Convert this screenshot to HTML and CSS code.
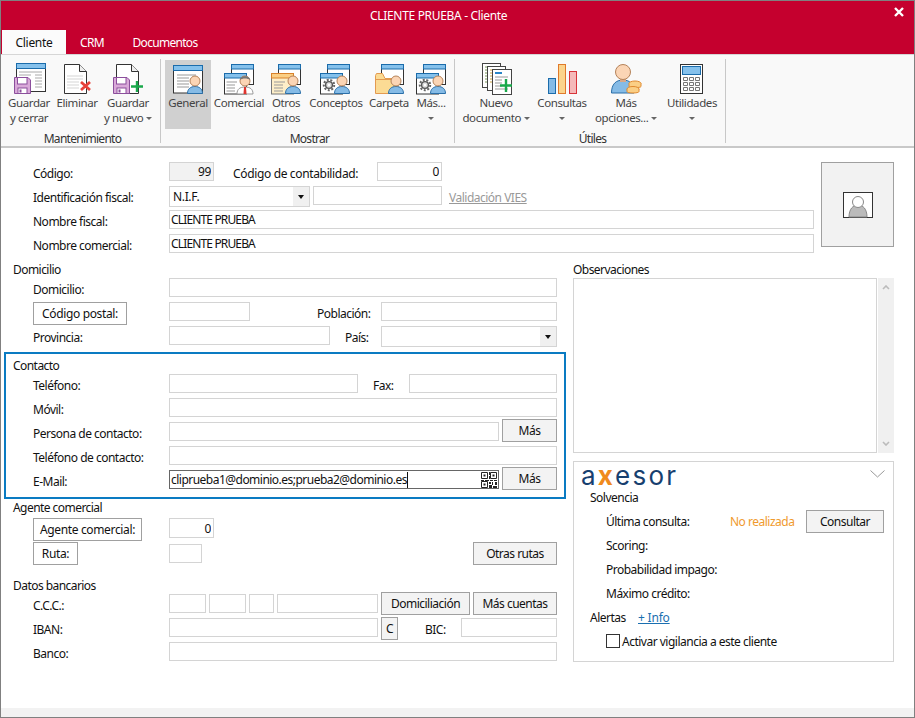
FILE: index.html
```html
<!DOCTYPE html>
<html lang="es">
<head>
<meta charset="utf-8">
<title>CLIENTE PRUEBA - Cliente</title>
<link rel="stylesheet" href="styles.css">
</head>
<body>
<svg class="defs" width="0" height="0" aria-hidden="true">
  <defs>
    <g id="person">
      <path d="M-7.5 12.5C-7.5 8-4.5 5.5 0 5.5S7.5 8 7.5 12.5Z" fill="#85bbe6" stroke="#2a6fa8"/>
      <circle r="5" fill="#fbd5b5" stroke="#b5835a"/>
    </g>
    <g id="gear">
      <circle r="5.2" fill="none" stroke="#666" stroke-width="2" stroke-dasharray="2 1.6"/>
      <circle r="3.4" fill="#ddd" stroke="#555" stroke-width="1.4"/>
      <circle r="1.2" fill="#fff"/>
    </g>
    <g id="floppy">
      <path d="M.5.5H14L16.5 3V16.5H.5Z" fill="#d9a9d9" stroke="#8b4f9c"/>
      <rect x="3.5" y=".5" width="9.5" height="6.5" fill="#fff" stroke="#8b4f9c"/>
      <rect x="4" y="11" width="9" height="5.5" fill="#fff" stroke="#8b4f9c"/>
      <rect x="5.5" y="12.5" width="2" height="3" fill="#8b4f9c"/>
    </g>
    <g id="backwin">
      <rect x=".5" y=".5" width="22" height="20" fill="#fff" stroke="#333"/>
      <rect x=".5" y=".5" width="22" height="4.5" fill="#85c1ec" stroke="#1b6cab"/>
    </g>
    <g id="frontwin">
      <rect x=".5" y=".5" width="22" height="20.5" fill="#fff" stroke="#333"/>
      <rect x=".5" y=".5" width="22" height="4.5" fill="#85c1ec" stroke="#1b6cab"/>
    </g>
  </defs>
</svg>

<div class="window">
  <header class="titlebar">
    <div class="title-row">
      <span class="title">CLIENTE PRUEBA - Cliente</span>
      <svg class="close" width="10" height="10" viewBox="0 0 10 10"><path d="M1 1L9 9M9 1L1 9" stroke="#fff" stroke-width="2.4"/></svg>
    </div>
    <nav class="tabs">
      <span class="tab tab-cliente">Cliente</span>
      <span class="tab tab-crm">CRM</span>
      <span class="tab tab-docs">Documentos</span>
    </nav>
  </header>

  <section class="ribbon">
    <div class="rb-group group-1">
      <div class="rb-buttons">
        <div class="rb-btn w48">
          <svg class="rb-icon" viewBox="0 0 36 36">
            <rect x="5.5" y="1.5" width="29" height="28" fill="#fff" stroke="#333"/>
            <rect x="5.5" y="1.5" width="29" height="5" fill="#85c1ec" stroke="#1b6cab"/>
            <path d="M8 10H31M8 13H20M24 13H31M24 16H31M24 19H31M24 22H31M24 25H31" stroke="#aaa"/>
            <use href="#floppy" x="3" y="15"/>
          </svg>
          <span class="rb-text">Guardar<br>y cerrar</span>
        </div>
        <div class="rb-btn w48">
          <svg class="rb-icon" viewBox="0 0 36 36">
            <path d="M5.5 2.5H20.5L27.5 9.5V31.5H5.5Z" fill="#fff" stroke="#333"/>
            <path d="M20.5 2.5V9.5H27.5" fill="#eee" stroke="#333"/>
            <path d="M8 14H24M8 17H24M8 20H20M8 23H20M8 26H20" stroke="#d5d5d5"/>
            <path d="M22 20L31 28M31 20L22 28" stroke="#e8413a" stroke-width="2.8"/>
          </svg>
          <span class="rb-text">Eliminar</span>
        </div>
        <div class="rb-btn w54">
          <svg class="rb-icon" viewBox="0 0 36 36">
            <path d="M6.5 2.5H21.5L28.5 9.5V31.5H6.5Z" fill="#fff" stroke="#333"/>
            <path d="M21.5 2.5V9.5H28.5" fill="#eee" stroke="#333"/>
            <use href="#floppy" x="3" y="15"/>
            <path d="M27 19V30M21 24.5H33" stroke="#19a84a" stroke-width="2.4"/>
          </svg>
          <span class="rb-text">Guardar<br>y nuevo <i class="caret"></i></span>
        </div>
      </div>
      <div class="rb-label">Mantenimiento</div>
    </div>
    <div class="rb-sep"></div>

    <div class="rb-group group-2">
      <div class="rb-buttons">
        <div class="rb-btn w46 rb-active">
          <svg class="rb-icon" viewBox="0 0 36 36">
            <rect x="3.5" y="3.5" width="29" height="27.5" fill="#fff" stroke="#333"/>
            <rect x="3.5" y="3.5" width="29" height="5" fill="#85c1ec" stroke="#1b6cab"/>
            <path d="M7 13H26M7 16H19M7 19H19M7 22H19M7 25H19" stroke="#999"/>
            <use href="#person" x="25" y="19"/>
          </svg>
          <span class="rb-text">General</span>
        </div>
        <div class="rb-btn w56">
          <svg class="rb-icon" viewBox="0 0 36 36">
            <use href="#backwin" x="10" y="2"/>
            <use href="#frontwin" x="3" y="11"/>
            <path d="M5.5 20H16M5.5 23H14M5.5 26H14M5.5 29H14" stroke="#999"/>
            <path d="M16 32C16 27 19 25 24 25S32 27 32 32Z" fill="#fff" stroke="#999"/>
            <path d="M23 25H25L25.5 32H22.5Z" fill="#e0352f"/>
            <circle cx="24" cy="19" r="5" fill="#fbd5b5" stroke="#b5835a"/>
            <path d="M19 18C19 13 29 13 29 18C27 16 21 16 19 18Z" fill="#777"/>
          </svg>
          <span class="rb-text">Comercial</span>
        </div>
        <div class="rb-btn w38">
          <svg class="rb-icon" viewBox="0 0 36 36">
            <use href="#backwin" x="10" y="2"/>
            <rect x="3.5" y="11.5" width="22" height="20.5" fill="#fdeec8" stroke="#777"/>
            <rect x="3.5" y="11.5" width="22" height="4.5" fill="#fbcf85" stroke="#d9822b"/>
            <path d="M6 20H17M6 23H15M6 26H15M6 29H15" stroke="#999"/>
            <use href="#person" x="25" y="19"/>
          </svg>
          <span class="rb-text">Otros<br>datos</span>
        </div>
        <div class="rb-btn w62">
          <svg class="rb-icon" viewBox="0 0 36 36">
            <use href="#backwin" x="9" y="2"/>
            <use href="#frontwin" x="2" y="11"/>
            <use href="#gear" x="11" y="23"/>
            <use href="#person" x="24" y="19"/>
          </svg>
          <span class="rb-text">Conceptos</span>
        </div>
        <div class="rb-btn w44">
          <svg class="rb-icon" viewBox="0 0 36 36">
            <use href="#backwin" x="10" y="2"/>
            <path d="M4.5 13.5V31.5H27V16.5H14L11.5 11.5H5.5Z" fill="#fbdb94" stroke="#e39a50"/>
            <path d="M4.5 17.5H27" stroke="#e39a50"/>
            <use href="#person" x="25" y="19"/>
          </svg>
          <span class="rb-text">Carpeta</span>
        </div>
        <div class="rb-btn w40">
          <svg class="rb-icon" viewBox="0 0 36 36">
            <use href="#backwin" x="10" y="2"/>
            <use href="#frontwin" x="3" y="11"/>
            <use href="#gear" x="12" y="23"/>
            <use href="#person" x="25" y="19"/>
          </svg>
          <span class="rb-text">Más...<br><i class="caret"></i></span>
        </div>
      </div>
      <div class="rb-label">Mostrar</div>
    </div>
    <div class="rb-sep"></div>

    <div class="rb-group group-3">
      <div class="rb-buttons">
        <div class="rb-btn w72">
          <svg class="rb-icon" viewBox="0 0 36 36">
            <rect x="4.5" y="1.5" width="18" height="24" fill="#fff" stroke="#444"/>
            <path d="M7 5H19M7 8H19M7 11H19M7 14H19M7 17H19M7 20H19" stroke="#7a9a5a"/>
            <rect x="9.5" y="4.5" width="18" height="24" fill="#fff" stroke="#444"/>
            <path d="M12 8H24M12 11H24M12 14H24M12 17H24M12 20H24" stroke="#c8a040"/>
            <rect x="14.5" y="7.5" width="19" height="25" fill="#fff" stroke="#444"/>
            <path d="M17 11H24" stroke="#2a86c8" stroke-width="2"/>
            <path d="M17 15H30M17 18H24M17 21H24M17 24H24M17 27H30" stroke="#999"/>
            <path d="M28 17V30M22 23.5H34" stroke="#19a84a" stroke-width="2.4"/>
          </svg>
          <span class="rb-text">Nuevo<br>documento <i class="caret"></i></span>
        </div>
        <div class="rb-btn w60">
          <svg class="rb-icon" viewBox="0 0 36 36">
            <rect x="4.5" y="16.5" width="7" height="15" fill="#85bbe6" stroke="#1b6cab"/>
            <rect x="14.5" y="2.5" width="7" height="29" fill="#fbd48c" stroke="#e07a2b"/>
            <rect x="25.5" y="9.5" width="7" height="22" fill="#f5b9b9" stroke="#d8343a"/>
          </svg>
          <span class="rb-text">Consultas<br><i class="caret"></i></span>
        </div>
        <div class="rb-btn w68">
          <svg class="rb-icon" viewBox="0 0 36 36">
            <path d="M3.5 31C3.5 22 8 18 15 18S26 22 26 31Z" fill="#85bbe6" stroke="#2a6fa8"/>
            <rect x="12" y="16" width="6" height="4" fill="#d8a888"/>
            <circle cx="15" cy="10" r="7.5" fill="#fbd5b5" stroke="#b5835a"/>
            <ellipse cx="27" cy="21.500" rx="6" ry="2.500" fill="#fbcf85" stroke="#e08a30"/>
            <path d="M21 21.500V24.500C21 26 33 26 33 24.500V21.500" fill="#fbcf85" stroke="#e08a30"/>
            <ellipse cx="25" cy="27" rx="6" ry="2.500" fill="#fbcf85" stroke="#e08a30"/>
            <path d="M19 27V29.500C19 31.500 31 31.500 31 29.500V27" fill="#fbcf85" stroke="#e08a30"/>
          </svg>
          <span class="rb-text">Más<br>opciones... <i class="caret"></i></span>
        </div>
        <div class="rb-btn w64">
          <svg class="rb-icon" viewBox="0 0 36 36">
            <rect x="6.500" y="2.500" width="22" height="29" fill="#fff" stroke="#333"/>
            <rect x="8.500" y="4.500" width="18" height="8" fill="#85c1ec" stroke="#1b6cab"/>
            <path d="M9.500 15.500h4v3h-4zM15.500 15.500h4v3h-4zM21.500 15.500h4v3h-4zM9.500 20.500h4v3h-4zM15.500 20.500h4v3h-4zM21.500 20.500h4v3h-4zM9.500 25.500h4v3h-4zM15.500 25.500h4v3h-4zM21.500 25.500h4v3h-4z" fill="none" stroke="#777"/>
          </svg>
          <span class="rb-text">Utilidades<br><i class="caret"></i></span>
        </div>
      </div>
      <div class="rb-label">Útiles</div>
    </div>
    <div class="rb-sep"></div>
  </section>

  <main class="main">
    <section class="top">
      <div class="top-fields">
        <div class="row">
          <label class="lbl">Código:</label>
          <input class="in w45 num shaded" value="99" readonly>
          <label class="lbl w144 ml19">Código de contabilidad:</label>
          <input class="in w65 num" value="0" readonly>
        </div>
        <div class="row">
          <label class="lbl">Identificación fiscal:</label>
          <div class="select w141"><span class="sel-text">N.I.F.</span><b class="sel-arrow"><i></i></b></div>
          <input class="in w129 ml3" readonly>
          <a class="vies">Validación VIES</a>
        </div>
        <div class="row">
          <label class="lbl">Nombre fiscal:</label>
          <input class="in w645" value="CLIENTE PRUEBA" readonly>
        </div>
        <div class="row">
          <label class="lbl">Nombre comercial:</label>
          <input class="in w645" value="CLIENTE PRUEBA" readonly>
        </div>
      </div>
      <div class="photo">
        <svg width="30" height="26" viewBox="0 0 30 26">
          <rect x=".5" y=".5" width="29" height="25" fill="#fff" stroke="#333"/>
          <path d="M6 25C6 17 10 13 15 13S24 17 24 25Z" fill="#bbb" stroke="#888"/>
          <circle cx="15" cy="10" r="5.500" fill="#fff" stroke="#888"/>
        </svg>
      </div>
    </section>

    <div class="columns">
      <div class="col-left">
        <h3 class="heading">Domicilio</h3>
        <div class="row">
          <label class="lbl">Domicilio:</label>
          <input class="in w388" readonly>
        </div>
        <div class="row">
          <button class="btn btn-white w94">Código postal:</button>
          <input class="in w81 ml42" readonly>
          <label class="lbl w64 ml67">Población:</label>
          <input class="in w176" readonly>
        </div>
        <div class="row">
          <label class="lbl">Provincia:</label>
          <input class="in w161" readonly>
          <label class="lbl w36 ml15">País:</label>
          <div class="select w176"><b class="sel-arrow"><i></i></b></div>
        </div>

        <section class="frame">
          <h3 class="heading">Contacto</h3>
          <div class="row">
            <label class="lbl">Teléfono:</label>
            <input class="in w189" readonly>
            <label class="lbl w36 ml15">Fax:</label>
            <input class="in w148" readonly>
          </div>
          <div class="row">
            <label class="lbl">Móvil:</label>
            <input class="in w388" readonly>
          </div>
          <div class="row">
            <label class="lbl">Persona de contacto:</label>
            <input class="in w330" readonly>
            <button class="btn w55 ml3 up3">Más</button>
          </div>
          <div class="row">
            <label class="lbl">Teléfono de contacto:</label>
            <input class="in w388" readonly>
          </div>
          <div class="row">
            <label class="lbl">E-Mail:</label>
            <div class="in email w330">
              <span class="email-text">cliprueba1@dominio.es;prueba2@dominio.es</span>
              <svg class="qr" width="16" height="16" viewBox="0 0 16 16">
                <path d="M.5.500h6v6h-6zM9.500.500h6v6h-6zM.5 9.500h6v6h-6z" fill="none" stroke="#222"/>
                <path d="M2.500 2.500h2v2h-2zM11.500 2.500h2v2h-2zM2.500 11.500h2v2h-2zM8 0h1v3H8zM8 4h1v3H8zM0 8h3v1H0zM4 8h4v1H4zM9 8h3v1H9zM13 8h3v1h-3zM8 10h2v2H8zM11 10h1v3h-1zM14 10h2v3h-2zM8 13h3v3H8zM12 14h4v2h-4z" fill="#222"/>
              </svg>
            </div>
            <button class="btn w55 ml3 up3">Más</button>
          </div>
        </section>

        <h3 class="heading heading-tight">Agente comercial</h3>
        <div class="row">
          <button class="btn btn-white w109">Agente comercial:</button>
          <input class="in w45 num ml27 tall" value="0" readonly>
        </div>
        <div class="row">
          <button class="btn btn-white w45">Ruta:</button>
          <input class="in w33 ml91 down2" readonly>
          <button class="btn w84 push">Otras rutas</button>
        </div>

        <h3 class="heading heading-gap">Datos bancarios</h3>
        <div class="row">
          <label class="lbl">C.C.C.:</label>
          <input class="in w37" readonly>
          <input class="in w37 ml3" readonly>
          <input class="in w25 ml3" readonly>
          <input class="in w101 ml3" readonly>
          <button class="btn w89 ml3 up2">Domiciliación</button>
          <button class="btn w84 ml3 up2">Más cuentas</button>
        </div>
        <div class="row">
          <label class="lbl">IBAN:</label>
          <input class="in w209" readonly>
          <button class="btn w17 ml3 up1">C</button>
          <label class="lbl w36 ml27">BIC:</label>
          <input class="in w96" readonly>
        </div>
        <div class="row">
          <label class="lbl">Banco:</label>
          <input class="in w388" readonly>
        </div>
      </div>

      <aside class="col-right">
        <h3 class="heading heading-flush">Observaciones</h3>
        <div class="notes">
          <div class="notes-box"></div>
          <div class="scrollbar">
            <svg width="8" height="5" viewBox="0 0 8 5"><path d="M1 4L4 1L7 4" fill="none" stroke="#bbb" stroke-width="1.600"/></svg>
            <svg width="8" height="5" viewBox="0 0 8 5"><path d="M1 1L4 4L7 1" fill="none" stroke="#bbb" stroke-width="1.600"/></svg>
          </div>
        </div>
        <section class="axesor">
          <div class="ax-head">
            <span class="ax-logo">a<span class="ax-x">x</span>esor</span>
            <svg width="15" height="8" viewBox="0 0 15 8"><path d="M.5.500L7.500 7L14.500.500" fill="none" stroke="#999"/></svg>
          </div>
          <div class="ax-row ax-l1">Solvencia</div>
          <div class="ax-row ax-l2">
            <span class="ax-lbl">Última consulta:</span>
            <span class="ax-status">No realizada</span>
            <button class="btn w78">Consultar</button>
          </div>
          <div class="ax-row ax-l2">Scoring:</div>
          <div class="ax-row ax-l2">Probabilidad impago:</div>
          <div class="ax-row ax-l2">Máximo crédito:</div>
          <div class="ax-row ax-l1">
            <span class="ax-alert">Alertas</span>
            <a class="ax-info">+ Info</a>
          </div>
          <div class="ax-row ax-l2">
            <span class="check"></span>
            <span>Activar vigilancia a este cliente</span>
          </div>
        </section>
      </aside>
    </div>
  </main>
  <footer class="statusbar"></footer>
</div>
</body>
</html>
```

FILE: styles.css
```css
* { box-sizing: border-box; }
html, body { margin: 0; padding: 0; }
body {
  font-family: "Noto Sans", "Open Sans", sans-serif;
  font-size: 12px;
  line-height: 16px;
  color: #111;
  background: #fff;
}
.defs { display: block; height: 0; }

.window {
  width: 915px;
  height: 718px;
  display: flex;
  flex-direction: column;
  border: 1px solid #808080;
  overflow: hidden;
}

.titlebar {
  height: 53px;
  background: #c5002e;
  display: flex;
  flex-direction: column;
  flex: none;
}
.title-row {
  height: 29px;
  display: flex;
  align-items: flex-start;
  color: #fff;
}
.title { margin: 7px 0 0 369px; letter-spacing: -0.32px; }
.close { margin: 6px 10px 0 auto; }
.tabs { display: flex; height: 24px; padding-left: 1px; }
.tab {
  color: #fff;
  text-align: center;
  line-height: 26px;
  letter-spacing: -0.7px;
}
.tab-cliente { width: 64px; background: #fbfbfb; color: #111; letter-spacing: -0.3px; }
.tab-crm { width: 52px; }
.tab-docs { width: 94px; }

.ribbon {
  flex: none;
  height: 94px;
  background: #f9f9f9;
  border-top: 1px solid #d6d6d6;
  border-bottom: 2px solid #c9c9c9;
  display: flex;
  color: #333;
}
.rb-group { padding-top: 5px; display: flex; flex-direction: column; }
.group-1 { width: 159px; padding-left: 4px; }
.group-2 { width: 293px; padding-left: 4px; }
.group-3 { width: 270px; padding-left: 5px; }
.rb-sep { width: 1px; margin: 4px 0 3px; background: #c8c8c8; flex: none; }
.rb-buttons { display: flex; height: 69px; flex: none; }
.rb-btn {
  display: flex;
  flex-direction: column;
  align-items: center;
  flex: none;
  padding-top: 2px;
}
.rb-active { background: #d0d0d0; }
.rb-icon { width: 36px; height: 36px; flex: none; }
.rb-text {
  margin-top: -3px;
  text-align: center;
  font-size: 11.5px;
  line-height: 15px;
  white-space: nowrap;
  letter-spacing: -0.4px;
  color: #444;
}
.caret {
  display: inline-block;
  width: 0;
  height: 0;
  border-left: 3px solid transparent;
  border-right: 3px solid transparent;
  border-top: 3px solid #666;
  vertical-align: middle;
}
.rb-label {
  margin-top: 2px;
  height: 16px;
  flex: none;
  text-align: center;
  letter-spacing: -0.7px;
  color: #333;
}

.main { flex: 1; padding: 14px 0 0 3px; min-height: 0; }
.top { display: flex; height: 96px; }
.top-fields { width: 810px; }
.top-fields .w645 { letter-spacing: -0.85px; padding-left: 1px; }
.photo {
  width: 73px;
  height: 85px;
  margin-left: 7px;
  background: #f2f2f2;
  border: 1px solid #a0a0a0;
  display: flex;
  align-items: center;
  justify-content: center;
  padding-left: 1px;
}

.columns { display: flex; }
.col-left { width: 562px; flex: none; }
.col-right { width: 321px; margin-left: 7px; flex: none; }

.heading {
  margin: 0;
  height: 20px;
  padding: 4px 0 0 9px;
  font-size: 12px;
  line-height: 16px;
  font-weight: 400;
  letter-spacing: -0.55px;
}
.heading-flush { padding-left: 0; }
.heading-tight { height: 19px; padding-top: 1px; }
.heading-gap { margin-top: 8px; }

.row {
  height: 24px;
  padding-left: 29px;
  padding-right: 9px;
  display: flex;
  align-items: flex-start;
}
.top-fields .row { padding-right: 0; }
.frame {
  width: 562px;
  height: 147px;
  margin-top: 2px;
  border: 2px solid #0a7bc2;
}
.frame .heading { padding-left: 7px; }
.frame .row { padding-left: 27px; }

.lbl {
  width: 136px;
  flex: none;
  padding-top: 4px;
  white-space: nowrap;
  letter-spacing: -0.5px;
}
.lbl.w144 { letter-spacing: -0.35px; }
.in {
  flex: none;
  height: 19px;
  padding: 0 2px;
  margin: 0;
  border: 1px solid #d4d4d4;
  background: #fff;
  font: inherit;
  line-height: 16px;
  color: #111;
  letter-spacing: -0.35px;
  outline: none;
  border-radius: 0;
}
.num { text-align: right; }
.shaded { background: #f2f2f2; }
.tall { height: 20px; }
.email {
  border-color: #666;
  display: flex;
  align-items: center;
  justify-content: space-between;
  padding-right: 1px;
  padding-left: 1px;
}
.email-text {
  border-right: 1px solid #111;
  line-height: 16px;
  white-space: nowrap;
  letter-spacing: -0.52px;
}
.qr { flex: none; }

.select {
  flex: none;
  height: 21px;
  border: 1px solid #d4d4d4;
  background: #fff;
  display: flex;
  align-items: center;
  justify-content: space-between;
  padding-left: 3px;
  letter-spacing: -0.35px;
}
.sel-text { margin-top: 1px; }
.sel-arrow {
  width: 16px;
  height: 19px;
  margin-left: auto;
  background: #f0f0f0;
  display: flex;
  align-items: center;
  justify-content: center;
}
.sel-arrow i {
  width: 0;
  height: 0;
  border-left: 3px solid transparent;
  border-right: 3px solid transparent;
  border-top: 4px solid #111;
}
.vies {
  margin: 4px 0 0 7px;
  color: #999;
  text-decoration: underline;
  letter-spacing: -0.5px;
}

.btn {
  flex: none;
  height: 23px;
  padding: 1px 0 0;
  border: 1px solid #a0a0a0;
  background: #f3f3f3;
  font: inherit;
  color: #111;
  letter-spacing: -0.5px;
  border-radius: 0;
}
.btn-white { background: #fff; letter-spacing: -0.35px; }
.push { margin-left: auto; }
.up1 { margin-top: -1px; }
.up2 { margin-top: -2px; }
.up3 { margin-top: -3px; }
.down2 { margin-top: 2px; }

.ml3 { margin-left: 3px; }
.ml15 { margin-left: 15px; }
.ml19 { margin-left: 19px; }
.ml27 { margin-left: 27px; }
.ml42 { margin-left: 42px; }
.ml67 { margin-left: 67px; }
.ml91 { margin-left: 91px; }

.w17 { width: 17px; }
.w25 { width: 25px; }
.w33 { width: 33px; }
.w36 { width: 36px; }
.w37 { width: 37px; }
.w38 { width: 38px; }
.w40 { width: 40px; }
.w44 { width: 44px; }
.w45 { width: 45px; }
.w46 { width: 46px; }
.w48 { width: 48px; }
.w54 { width: 54px; }
.w55 { width: 55px; }
.w56 { width: 56px; }
.w60 { width: 60px; }
.w62 { width: 62px; }
.w64 { width: 64px; }
.w65 { width: 65px; }
.w68 { width: 68px; }
.w72 { width: 72px; }
.w78 { width: 78px; }
.w81 { width: 81px; }
.w84 { width: 84px; }
.w89 { width: 89px; }
.w94 { width: 94px; }
.w96 { width: 96px; }
.w101 { width: 101px; }
.w109 { width: 109px; }
.w129 { width: 129px; }
.w141 { width: 141px; }
.w144 { width: 144px; }
.w148 { width: 148px; }
.w161 { width: 161px; }
.w176 { width: 176px; }
.w189 { width: 189px; }
.w209 { width: 209px; }
.w330 { width: 330px; }
.w388 { width: 388px; }
.w645 { width: 645px; }

.notes { display: flex; height: 175px; }
.notes-box { width: 304px; border: 1px solid #d4d4d4; background: #fff; }
.scrollbar {
  width: 16px;
  margin-left: 1px;
  background: #f0f0f0;
  display: flex;
  flex-direction: column;
  align-items: center;
  justify-content: space-between;
  padding: 7px 0;
}

.axesor {
  width: 321px;
  height: 201px;
  margin-top: 8px;
  border: 1px solid #d4d4d4;
}
.ax-head {
  height: 24px;
  display: flex;
  align-items: flex-start;
  justify-content: space-between;
  padding: 8px 8px 0 7px;
}
.ax-logo {
  font-family: "Inter", "Noto Sans", sans-serif;
  font-size: 26px;
  font-weight: 400;
  line-height: 18px;
  margin-top: -3px;
  letter-spacing: 2.2px;
  color: #17406f;
}
.ax-x { color: #f08a1c; font-weight: 700; }
.ax-row {
  height: 24px;
  display: flex;
  align-items: flex-start;
  line-height: 16px;
  padding-top: 4px;
  letter-spacing: -0.5px;
  white-space: nowrap;
}
.ax-l1 { padding-left: 16px; }
.ax-l2 { padding-left: 32px; }
.ax-lbl { width: 124px; flex: none; }
.ax-status { width: 76px; flex: none; color: #f09a2e; }
.ax-row .btn { margin-top: -4px; }
.ax-alert { width: 48px; flex: none; }
.ax-info { color: #1a6fb0; text-decoration: underline; letter-spacing: -0.2px; }
.check {
  width: 14px;
  height: 14px;
  margin: 0 2px 0 0;
  border: 1px solid #333;
  background: #fff;
  flex: none;
}

.statusbar { flex: none; height: 9px; background: #f2f2f2; }
```
